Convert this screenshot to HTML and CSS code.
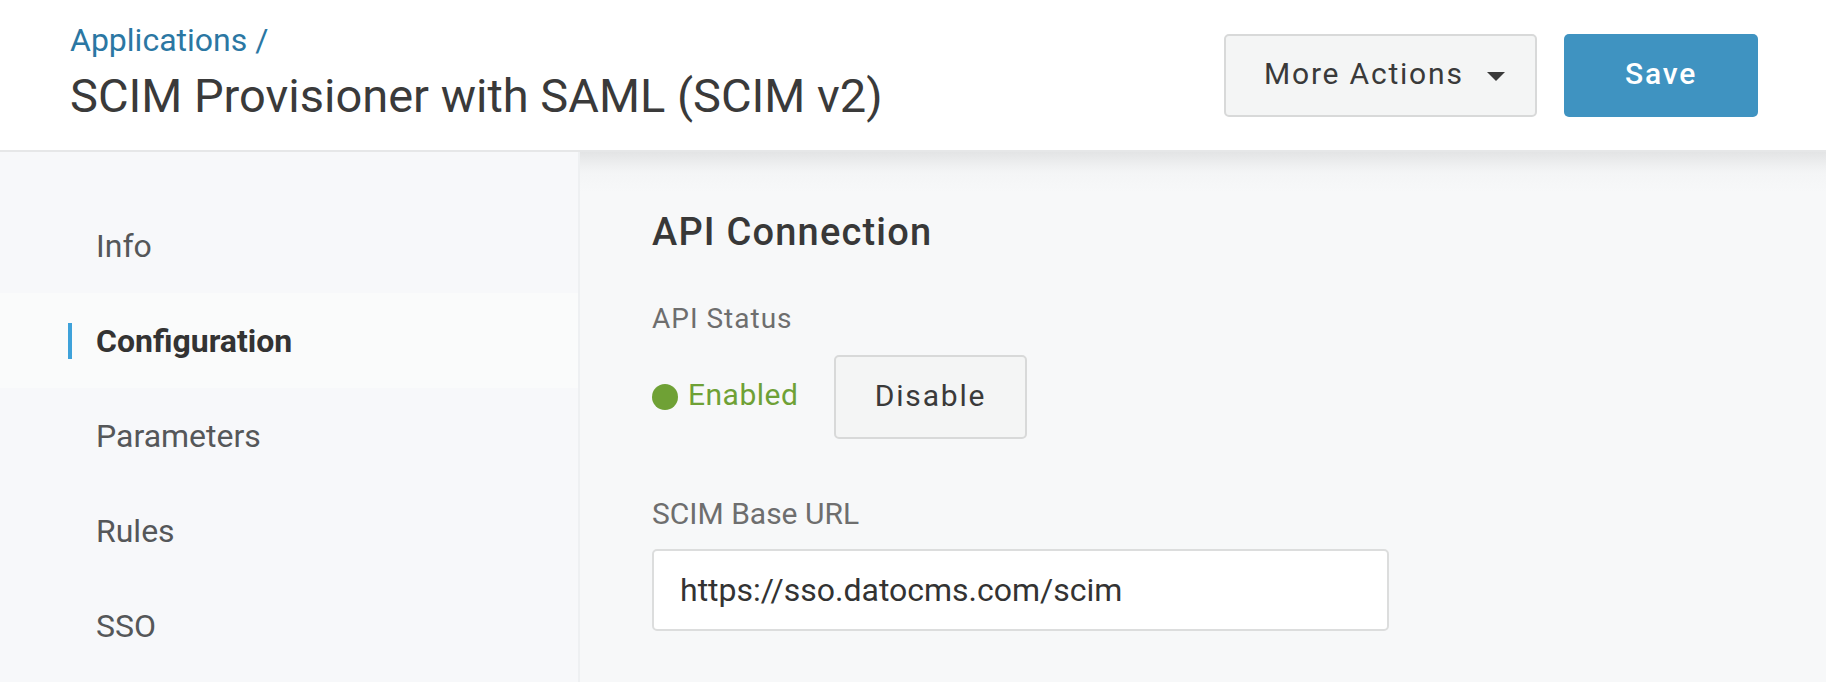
FILE: index.html
```html
<!DOCTYPE html>
<html lang="en">
<head>
<meta charset="utf-8">
<title>SCIM Provisioner with SAML (SCIM v2)</title>
<link rel="stylesheet" href="styles.css">
</head>
<body>
<header class="topbar">
  <div class="titles">
    <a class="crumb" href="#">Applications /</a>
    <h1 class="page-title">SCIM Provisioner with SAML (SCIM v2)</h1>
  </div>
  <div class="actions">
    <button class="btn btn-more" type="button">
      <span class="btn-text">More Actions</span>
      <svg class="caret" width="18" height="9" viewBox="0 0 18 9"><path d="M0 0H18L9 9Z" fill="#3a3a3a"/></svg>
    </button>
    <button class="btn btn-save" type="button">Save</button>
  </div>
</header>
<div class="layout">
  <nav class="sidebar">
    <a class="nav-item" href="#">Info</a>
    <a class="nav-item active" href="#">Configuration</a>
    <a class="nav-item" href="#">Parameters</a>
    <a class="nav-item" href="#">Rules</a>
    <a class="nav-item" href="#">SSO</a>
  </nav>
  <main class="content">
    <h2 class="section-title">API Connection</h2>
    <div class="field-label spaced">API Status</div>
    <div class="status-row">
      <span class="status"><span class="dot"></span>Enabled</span>
      <button class="btn btn-disable" type="button">Disable</button>
    </div>
    <div class="field-label url-label">SCIM Base URL</div>
    <div class="input">https://sso.datocms.com/scim</div>
  </main>
</div>
</body>
</html>
```
FILE: styles.css
```css
* { box-sizing: border-box; }
html, body { margin: 0; padding: 0; }
body {
  font-family: Roboto, "Liberation Sans", sans-serif;
  background: #f7f8fa;
  color: #3a3a3a;
  height: 682px;
  overflow: hidden;
}
.topbar {
  height: 152px;
  background: #ffffff;
  border-bottom: 2px solid #e6e7e8;
  display: flex;
  align-items: center;
  justify-content: space-between;
  padding: 0 68px 0 70px;
}
.titles {
  display: flex;
  flex-direction: column;
  gap: 8px;
  align-self: flex-start;
  padding-top: 20px;
}
.crumb {
  font-size: 32px;
  line-height: 40px;
  color: #2b77a3;
  text-decoration: none;
}
.page-title {
  margin: 0;
  font-size: 47px;
  line-height: 56px;
  font-weight: 400;
  color: #3a3a3a;
}
.actions {
  display: flex;
  gap: 27px;
  margin-top: 1px;
}
.btn {
  font-family: Roboto, "Liberation Sans", sans-serif;
  font-size: 30px;
  letter-spacing: 1.8px;
  height: 83px;
  border-radius: 5px;
  display: flex;
  align-items: center;
  white-space: nowrap;
  padding-bottom: 5px;
  cursor: pointer;
}
.btn-more {
  width: 313px;
  padding-left: 38px;
  padding-right: 30px;
  background: #f4f5f5;
  border: 2px solid #d8d9d9;
  color: #3a3a3a;
  justify-content: space-between;
}
.caret { flex: none; margin-top: 5px; }
.btn-save {
  width: 194px;
  justify-content: center;
  background: #3f93c1;
  border: none;
  color: #ffffff;
  font-weight: 500;
}
.layout {
  display: flex;
  height: 530px;
}
.sidebar {
  width: 580px;
  flex: none;
  background: #f7f8fa;
  border-right: 2px solid #eef0f2;
  padding-top: 46px;
  display: flex;
  flex-direction: column;
}
.nav-item {
  position: relative;
  height: 95px;
  flex: none;
  display: flex;
  align-items: center;
  padding-left: 96px;
  font-size: 32px;
  color: #555759;
  text-decoration: none;
}
.nav-item.active {
  background: #fafbfb;
  font-weight: 700;
  color: #333333;
}
.nav-item.active::before {
  content: "";
  position: absolute;
  left: 68px;
  top: 30px;
  width: 4px;
  height: 36px;
  background: #3ea2da;
}
.content {
  flex: 1;
  padding: 57px 0 0 72px;
  background: linear-gradient(to bottom, #e3e4e5 0, #eff0f1 14px, #f4f5f6 21px, #f7f8f9 40px);
}
.section-title {
  margin: 0;
  font-size: 38px;
  line-height: 46px;
  font-weight: 500;
  letter-spacing: 1.2px;
  color: #383838;
}
.field-label {
  color: #6e6e6e;
}
.spaced {
  margin-top: 46px;
  font-size: 28px;
  line-height: 36px;
  letter-spacing: 1px;
}
.status-row {
  display: flex;
  align-items: center;
  margin-top: 18px;
}
.status {
  display: flex;
  align-items: center;
  gap: 10px;
  font-size: 30px;
  letter-spacing: 0.5px;
  color: #6fa136;
  width: 182px;
  padding-bottom: 5px;
}
.dot {
  width: 26px;
  height: 26px;
  border-radius: 50%;
  background: #6fa135;
  flex: none;
  margin-top: 4px;
}
.btn-disable {
  width: 193px;
  height: 84px;
  justify-content: center;
  background: #f4f5f5;
  border: 2px solid #d8d9d9;
  color: #3a3a3a;
}
.url-label {
  margin-top: 57px;
  font-size: 30px;
  line-height: 36px;
}
.input {
  margin-top: 17px;
  width: 737px;
  height: 82px;
  background: #ffffff;
  border: 2px solid #dcdddd;
  border-radius: 5px;
  padding-left: 26px;
  display: flex;
  align-items: center;
  font-size: 32px;
  color: #333333;
}
```
